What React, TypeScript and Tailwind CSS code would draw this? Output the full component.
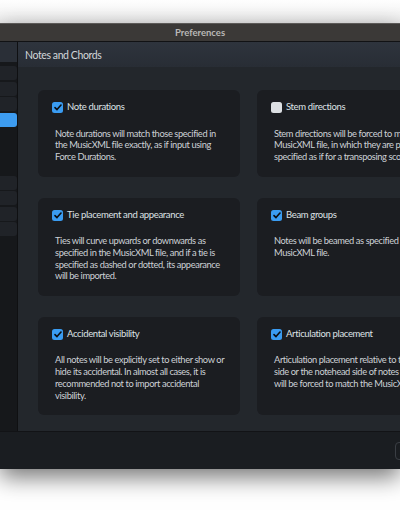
const font = { fontFamily: '"Lato", "Open Sans", sans-serif' }

type Option = {
  label: string
  checked: boolean
  lines: string[]
}

const rows: Option[][] = [
  [
    {
      label: "Note durations",
      checked: true,
      lines: [
        "Note durations will match those specified in",
        "the MusicXML file exactly, as if input using",
        "Force Durations.",
      ],
    },
    {
      label: "Stem directions",
      checked: false,
      lines: [
        "Stem directions will be forced to match the",
        "MusicXML file, in which they are properly",
        "specified as if for a transposing score.",
      ],
    },
  ],
  [
    {
      label: "Tie placement and appearance",
      checked: true,
      lines: [
        "Ties will curve upwards or downwards as",
        "specified in the MusicXML file, and if a tie is",
        "specified as dashed or dotted, its appearance",
        "will be imported.",
      ],
    },
    {
      label: "Beam groups",
      checked: true,
      lines: ["Notes will be beamed as specified in the", "MusicXML file."],
    },
  ],
  [
    {
      label: "Accidental visibility",
      checked: true,
      lines: [
        "All notes will be explicitly set to either show or",
        "hide its accidental. In almost all cases, it is",
        "recommended not to import accidental",
        "visibility.",
      ],
    },
    {
      label: "Articulation placement",
      checked: true,
      lines: [
        "Articulation placement relative to the stem",
        "side or the notehead side of notes and chords",
        "will be forced to match the MusicXML file.",
      ],
    },
  ],
]

function Checkbox({ checked }: { checked: boolean }) {
  if (!checked) {
    return <div className="h-[11px] w-[11px] shrink-0 rounded-[2.5px] bg-[#dcdfe3]" />
  }
  return (
    <div className="flex h-[11px] w-[11px] shrink-0 items-center justify-center rounded-[2.5px] bg-[#3a9cf2]">
      <svg width="8" height="7" viewBox="0 0 8 7" fill="none">
        <path d="M1 3.6 L3 5.6 L7 1" stroke="#0b0d10" strokeWidth="1.6" strokeLinecap="round" strokeLinejoin="round" />
      </svg>
    </div>
  )
}

function Card({ option }: { option: Option }) {
  return (
    <div className="rounded-[6px] bg-[#1b1d21] pb-[14px] pt-[12px]">
      <div className="flex h-[11px] items-center gap-[4px] pl-[14px]">
        <Checkbox checked={option.checked} />
        <span className="whitespace-nowrap text-[9.5px] tracking-[-0.35px] text-[#dfe2e6]">{option.label}</span>
      </div>
      <p className="mt-[14.5px] whitespace-nowrap pl-[17px] text-[9.3px] leading-[11.7px] tracking-[-0.4px] text-[#cdd1d6]">
        {option.lines.map((line, i) => (
          <span key={i} className="block">
            {line}
          </span>
        ))}
      </p>
    </div>
  )
}

export default function App() {
  return (
    <div className="relative h-[516px] w-[400px] overflow-hidden bg-white" style={font}>
      <div className="h-[23px] bg-gradient-to-b from-white to-[#eeeeee]" />

      <div className="flex h-[446px] flex-col bg-[#1a1d21] shadow-[0_8px_22px_rgba(0,0,0,0.55)]">
        {/* title bar */}
        <div className="flex h-[19px] items-center justify-center border-t border-[#5c5a58] border-b border-b-[#111214] bg-[#3b3937] pt-px">
          <span className="text-[9.5px] font-bold text-[#b9b8b6]">Preferences</span>
        </div>

        <div className="flex min-h-0 flex-1">
          {/* sidebar */}
          <div className="flex w-[17px] shrink-0 flex-col bg-[#16181b]">
            <div className="h-[20px] bg-[#2a2f37]" />
            <div className="flex flex-col gap-[1.5px] pt-[4px]">
              <div className="h-[14px] rounded-r-[3px] bg-[#202328]" />
              <div className="h-[14px] rounded-r-[3px] bg-[#202328]" />
              <div className="h-[14px] rounded-r-[3px] bg-[#202328]" />
              <div className="h-[14px] rounded-r-[3px] bg-[#3d9cf0]" />
            </div>
            <div className="flex flex-col gap-[1.5px] pt-[49px]">
              <div className="h-[14px] rounded-r-[3px] bg-[#202328]" />
              <div className="h-[14px] rounded-r-[3px] bg-[#202328]" />
              <div className="h-[14px] rounded-r-[3px] bg-[#202328]" />
              <div className="h-[14px] rounded-r-[3px] bg-[#202328]" />
            </div>
          </div>
          <div className="w-px shrink-0 bg-[#0f1012]" />

          {/* content */}
          <div className="flex min-w-0 flex-1 flex-col overflow-hidden bg-[#23272c]">
            <div className="flex h-[25px] shrink-0 items-center bg-gradient-to-b from-[#2e343d] to-[#282d35] pl-[7px] pt-[2px]">
              <span className="text-[10.5px] tracking-[-0.4px] text-[#d3d6da]">Notes and Chords</span>
            </div>
            <div className="grid grid-cols-[202px_202px] gap-x-[17px] gap-y-[21px] pl-[20px] pt-[23px]">
              {rows.flat().map((opt) => (
                <Card key={opt.label} option={opt} />
              ))}
            </div>
          </div>
        </div>

        {/* footer */}
        <div className="flex h-[38px] shrink-0 items-center justify-end border-t border-[#121316] bg-[#1a1d21]">
          <div className="mr-[-12px] h-[18px] w-[17px] rounded-[4px] border border-[#3a3e44]" />
        </div>
      </div>
    </div>
  )
}
